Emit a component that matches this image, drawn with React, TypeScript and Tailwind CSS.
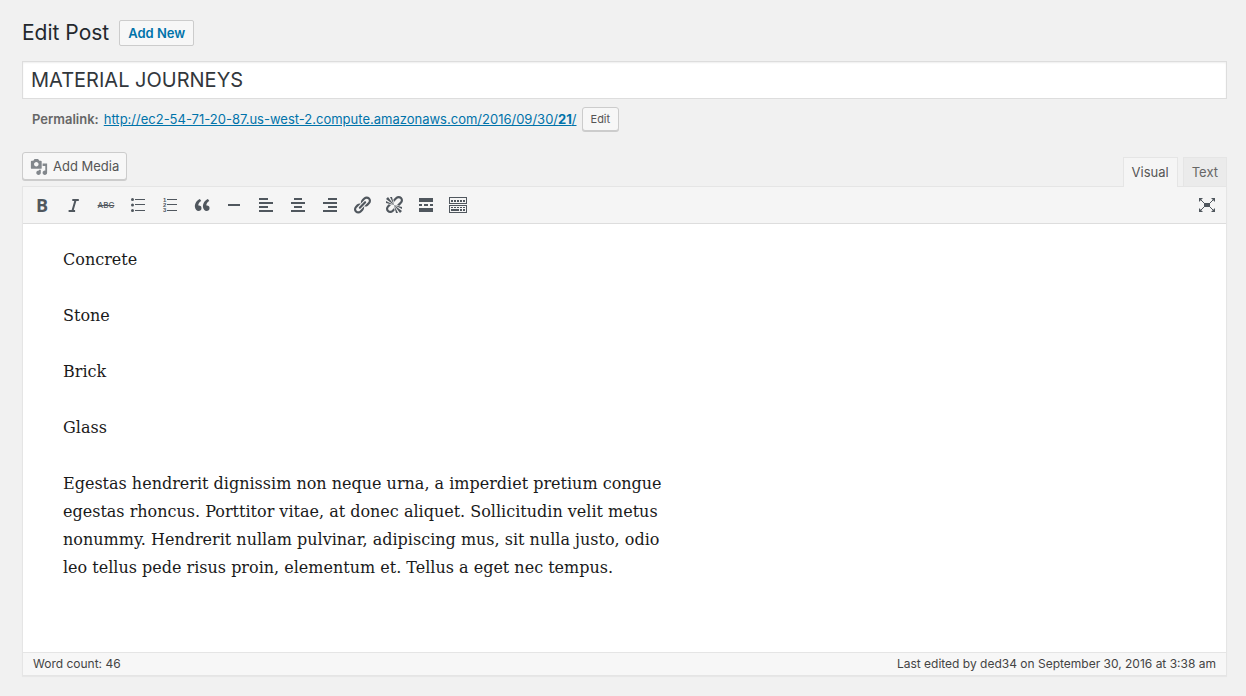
import React from "react";

type IconProps = { children: React.ReactNode };

function Icon({ children }: IconProps) {
  return (
    <svg viewBox="0 0 20 20" className="size-5 shrink-0" fill="currentColor" aria-hidden="true">
      {children}
    </svg>
  );
}

const LINK_PATH =
  "M17.74 2.76c1.68 1.69 1.68 4.41 0 6.1l-1.53 1.52c-1.12 1.12-2.7 1.47-4.14 1.09l2.62-2.61.76-.77.76-.76c.84-.84.84-2.2 0-3.04-.84-.85-2.2-.85-3.04 0l-.77.76-3.38 3.38c-.37-1.44-.02-3.02 1.1-4.14l1.52-1.53c1.69-1.68 4.42-1.68 6.1 0zM8.59 13.43l5.34-5.34c.42-.42.42-1.1 0-1.52-.44-.43-1.13-.39-1.53 0l-5.33 5.34c-.42.42-.42 1.1 0 1.52.44.43 1.13.39 1.52 0zm-.76 2.29l4.14-4.15c.38 1.44.03 3.02-1.09 4.14l-1.52 1.53c-1.69 1.68-4.41 1.68-6.1 0-1.68-1.68-1.68-4.42 0-6.1l1.53-1.52c1.12-1.12 2.7-1.47 4.14-1.1l-4.14 4.15c-.85.84-.85 2.2 0 3.05.84.84 2.2.84 3.04 0z";

const UNLINK_PATH =
  "M17.74 2.26c1.68 1.69 1.68 4.41 0 6.1l-1.53 1.52c-.32.33-.69.58-1.08.77L13 10l1.69-1.64.76-.77.76-.76c.84-.84.84-2.2 0-3.04-.84-.85-2.2-.85-3.04 0l-.77.76-.76.76L10 7l-.65-2.14c.19-.38.44-.75.77-1.07l1.52-1.53c1.69-1.68 4.42-1.68 6.1 0zM2 4l8 6-6-8zm4-2l4 8-2-8H6zM2 6l8 4-8-2V6zm7.36 7.69L10 13l.74 2.35-1.38 1.39c-1.69 1.68-4.41 1.68-6.1 0-1.68-1.68-1.68-4.42 0-6.1l1.39-1.38L7 10l-.69.64-1.52 1.53c-.85.84-.85 2.2 0 3.04.84.85 2.2.85 3.04 0zM18 16l-8-6 6 8zm-4 2l-4-8 2 8h2zm4-4l-8-4 8 2v2z";

const tools: { label: string; icon: React.ReactNode }[] = [
  { label: "Bold", icon: <span className="font-['Open_Sans',sans-serif] text-lg leading-5 font-bold">B</span> },
  {
    label: "Italic",
    icon: (
      <Icon>
        <path d="M8.3 5h6.500M4.600 16h6.500M11.600 5L8.400 16" fill="none" stroke="currentColor" strokeWidth="2" />
      </Icon>
    ),
  },
  {
    label: "Strikethrough",
    icon: <span className="text-[8px] leading-5 font-medium line-through">ABC</span>,
  },
  {
    label: "Bulleted list",
    icon: (
      <Icon>
        <circle cx="4.5" cy="4.5" r="1.5" />
        <circle cx="4.5" cy="10" r="1.5" />
        <circle cx="4.5" cy="15.5" r="1.5" />
        <path d="M7 4h10v1H7zM7 9h10v1H7zM7 15h10v1H7z" />
      </Icon>
    ),
  },
  {
    label: "Numbered list",
    icon: (
      <Icon>
        <g fontFamily="Liberation Sans, sans-serif" fontSize="6" fontWeight="700">
          <text x="3" y="7">1</text>
          <text x="3" y="12">2</text>
          <text x="3" y="17">3</text>
        </g>
        <path d="M7 4h10v1H7zM7 9h10v1H7zM7 15h10v1H7z" />
      </Icon>
    ),
  },
  {
    label: "Blockquote",
    icon: (
      <Icon>
        <path d="M9.49 13.22c0-.74-.2-1.38-.61-1.9-.62-.78-1.83-.88-2.53-.72-.29-1.65 1.11-3.75 2.92-4.65L7.88 4c-2.73 1.3-5.42 4.28-4.96 8.05C3.21 14.43 4.59 16 6.54 16c.85 0 1.56-.25 2.12-.75s.83-1.18.83-2.03zm8.05 0c0-.74-.2-1.38-.61-1.9-.63-.78-1.83-.88-2.53-.72-.29-1.65 1.11-3.75 2.92-4.65L15.93 4c-2.73 1.3-5.41 4.28-4.95 8.05.29 2.38 1.66 3.95 3.61 3.95.85 0 1.56-.25 2.12-.75s.83-1.18.83-2.03z" />
      </Icon>
    ),
  },
  { label: "Horizontal line", icon: <Icon><path d="M4 9h12v2H4z" /></Icon> },
  { label: "Align left", icon: <Icon><path d="M12 5V3H3v2h9zm5 4V7H3v2h14zm-5 4v-2H3v2h9zm5 4v-2H3v2h14z" /></Icon> },
  { label: "Align center", icon: <Icon><path d="M14 5V3H6v2h8zm3 4V7H3v2h14zm-3 4v-2H6v2h8zm3 4v-2H3v2h14z" /></Icon> },
  { label: "Align right", icon: <Icon><path d="M17 5V3H8v2h9zm0 4V7H3v2h14zm0 4v-2H8v2h9zm0 4v-2H3v2h14z" /></Icon> },
  { label: "Insert link", icon: <Icon><path d={LINK_PATH} /></Icon> },
  { label: "Remove link", icon: <Icon><path d={UNLINK_PATH} /></Icon> },
  { label: "Read more", icon: <Icon><path d="M17 7V3H3v4h14zM6 11V9H3v2h3zm6 0V9H8v2h4zm5 0V9h-3v2h3zm0 6v-4H3v4h14z" /></Icon> },
  {
    label: "Toolbar toggle",
    icon: (
      <Icon>
        <path fillRule="evenodd" d="M1 2h18v7H1zM2 3v5h16V3zM1 10h18v8H1zM2 11v6h16v-6z" />
        <path d="M3 5h2v2H3zM6 5h2v2H6zM9 5h2v2H9zM12 5h2v2h-2zM15 5h2v2h-2zM3 12h2v1H3zM6 12h2v1H6zM9 12h2v1H9zM12 12h2v1h-2zM15 12h2v1h-2zM3 14h8v2H3zM12 14h2v2h-2zM15 14h2v2h-2z" />
      </Icon>
    ),
  },
];

const notes = ["Concrete", "Stone", "Brick", "Glass"];

export default function App() {
  return (
    <main className="min-h-screen bg-[#f1f1f1] px-[22px] pt-5 pr-[19px] pb-5 font-[Inter,sans-serif] text-[13px] text-[#444]">
      <header className="flex items-center gap-2.5">
        <h1 className="text-[21px] leading-[26px] text-[#23282d]">Edit Post</h1>
        <a href="#new" className="rounded-[2px] border border-[#ccc] bg-[#f7f7f7] px-2 leading-6 font-semibold text-[#0073aa]">
          Add New
        </a>
      </header>

      <input
        aria-label="Post title"
        defaultValue="MATERIAL JOURNEYS"
        className="mt-[15px] block h-[38px] w-full border border-[#ddd] bg-white px-2 text-xl text-[#32373c] shadow-[inset_0_1px_2px_rgba(0,0,0,0.07)] outline-none"
      />

      <div className="mt-2 flex items-center gap-[5px] px-2.5">
        <strong className="pt-px font-semibold text-[#666]">Permalink:</strong>
        <a href="#permalink" className="pt-px text-[#0073aa] underline">
          http://ec2-54-71-20-87.us-west-2.compute.amazonaws.com/2016/09/30/<b>21</b>/
        </a>
        <button className="h-6 rounded-[3px] border border-[#ccc] bg-[#f7f7f7] px-2 text-[11px] text-[#555] shadow-[0_1px_0_#ccc]">Edit</button>
      </div>

      <div className="mt-5 flex items-start justify-between">
        <button className="mt-px flex h-7 items-center gap-[5px] rounded-[3px] border border-[#ccc] bg-[#f7f7f7] px-[7px] pt-px text-[#555] shadow-[0_1px_0_#ccc]">
          <svg viewBox="0 0 20 20" className="size-[18px]" fill="#82878c" aria-hidden="true">
            <path d="M13 11V4c0-.55-.45-1-1-1h-1.67L9 1H5L3.670 3H2c-.55 0-1 .45-1 1v7c0 .55.45 1 1 1h10c.55 0 1-.45 1-1zM7 4.500c1.380 0 2.500 1.120 2.500 2.500S8.380 9.500 7 9.500 4.500 8.380 4.500 7 5.620 4.500 7 4.500zM14 6h5v10.500c0 1.380-1.120 2.500-2.500 2.500S14 17.880 14 16.500s1.120-2.500 2.500-2.500c.17 0 .34.02.5.05V9h-3V6zm-4 8.050V13h2v3.500c0 1.380-1.120 2.500-2.500 2.500S7 17.880 7 16.500 8.120 14 9.500 14c.17 0 .34.02.5.05z" />
          </svg>
          Add Media
        </button>
        <div className="mt-1.5 -mb-px flex items-end gap-[5px] text-[#555]">
          <button className="relative z-10 h-[30px] border border-b-0 border-[#e5e5e5] bg-[#f5f5f5] px-2">Visual</button>
          <button className="mb-px h-[29px] border border-b-0 border-[#e5e5e5] bg-[#ebebeb] px-2 pt-px text-[#666]">Text</button>
        </div>
      </div>

      <section className="border border-[#e5e5e5] bg-white shadow-[0_1px_1px_rgba(0,0,0,0.04)]">
        <div className="flex h-[37px] items-center justify-between border-b border-[#ddd] bg-[#f5f5f5] px-[3px] text-[#50575e]">
          <div className="flex">
            {tools.map((tool) => (
              <button key={tool.label} aria-label={tool.label} className="flex h-7 w-8 items-center justify-center">
                {tool.icon}
              </button>
            ))}
          </div>
          <button aria-label="Distraction-free writing" className="flex h-7 w-8 items-center justify-center">
            <Icon>
              <path d="M7 8h6v4H7z" />
              <path d="M2 3h4L2 7zM18 3h-4l4 4zM2 17h4l-4-4zM18 17h-4l4-4z" />
              <path d="M3 4l5 5M17 4l-5 5M3 16l5-5M17 16l-5-5" stroke="currentColor" strokeWidth="1" />
            </Icon>
          </button>
        </div>

        <article className="min-h-[428px] px-10 pt-[22px] font-['DejaVu_Serif',serif] text-base leading-7 text-[#1a1a1a]">
          <div className="flex max-w-[612px] flex-col gap-7">
            {notes.map((note) => (
              <p key={note}>{note}</p>
            ))}
            <p>
              Egestas hendrerit dignissim non neque urna, a imperdiet pretium congue
              <br />
              egestas rhoncus. Porttitor vitae, at donec aliquet. Sollicitudin velit metus
              <br />
              nonummy. Hendrerit nullam pulvinar, adipiscing mus, sit nulla justo, odio
              <br />
              leo tellus pede risus proin, elementum et. Tellus a eget nec tempus.
            </p>
          </div>
        </article>

        <footer className="flex h-[23px] items-center justify-between border-t border-[#e5e5e5] bg-[#f7f7f7] px-2.5 text-xs text-[#444]">
          <span>Word count: 46</span>
          <span>Last edited by ded34 on September 30, 2016 at 3:38 am</span>
        </footer>
      </section>
    </main>
  );
}
